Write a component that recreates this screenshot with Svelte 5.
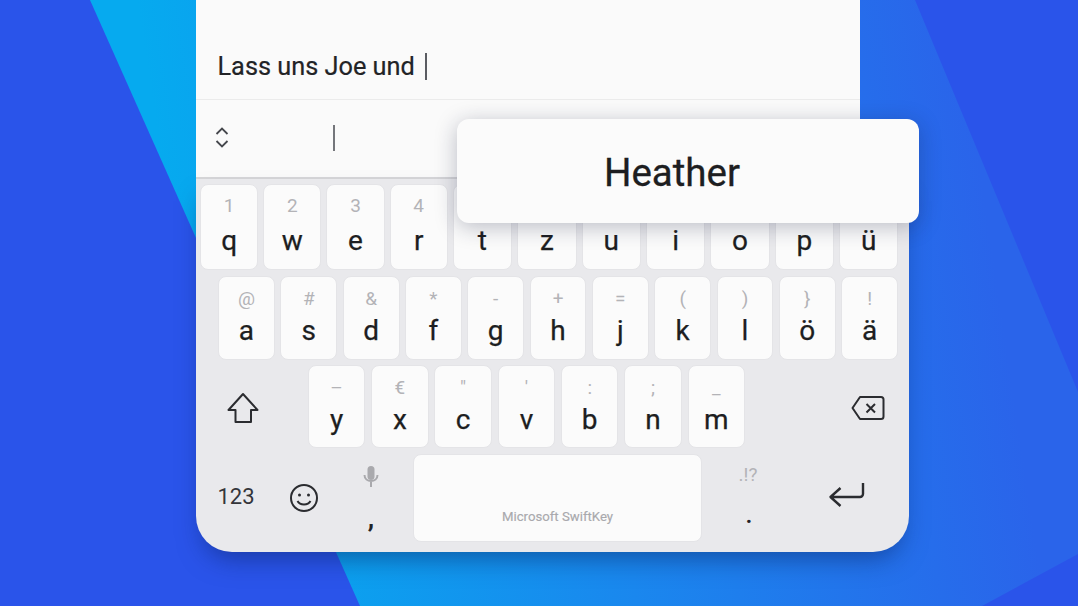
<script>
  const row1 = [
    ['1', 'q'], ['2', 'w'], ['3', 'e'], ['4', 'r'], ['', 't'], ['', 'z'],
    ['', 'u'], ['', 'i'], ['', 'o'], ['', 'p'], ['', 'ü']
  ];
  const row2 = [
    ['@', 'a'], ['#', 's'], ['&', 'd'], ['*', 'f'], ['-', 'g'], ['+', 'h'],
    ['=', 'j'], ['(', 'k'], [')', 'l'], ['}', 'ö'], ['!', 'ä']
  ];
  const row3 = [
    ['–', 'y'], ['€', 'x'], ['"', 'c'], ["'", 'v'], [':', 'b'], [';', 'n'], ['_', 'm']
  ];
</script>

<div class="stage">
  <svg class="bg" viewBox="0 0 1078 606" aria-hidden="true">
    <defs>
      <linearGradient id="shard" gradientUnits="userSpaceOnUse" x1="200" y1="420" x2="1000" y2="300">
        <stop offset="0" stop-color="#06aaef" />
        <stop offset="0.5" stop-color="#1a87ee" />
        <stop offset="1" stop-color="#2a64ea" />
      </linearGradient>
    </defs>
    <rect width="1078" height="606" fill="#2a54ea" />
    <polygon points="90,0 915,0 1078,392 1078,554 982,606 360,606" fill="url(#shard)" />
  </svg>

  <section class="compose">
    <div class="message">
      <span>Lass uns Joe und</span>
      <i class="caret"></i>
    </div>
    <div class="suggestions">
      <svg class="chevrons" width="16" height="24" viewBox="0 0 16 24" aria-hidden="true">
        <path d="M2.500 8 L8 2.500 L13.500 8 M2.500 15 L8 20.500 L13.500 15" />
      </svg>
      <i class="cursor"></i>
    </div>
  </section>

  <section class="keyboard">
    <div class="row row1">
      {#each row1 as [hint, letter]}
        <div class="key"><span class="hint">{hint}</span><span class="letter">{letter}</span></div>
      {/each}
    </div>

    <div class="row row2">
      {#each row2 as [hint, letter]}
        <div class="key"><span class="hint">{hint}</span><span class="letter">{letter}</span></div>
      {/each}
    </div>

    <div class="row row3">
      <div class="slot shift">
        <svg width="34" height="34" viewBox="0 0 34 34" aria-hidden="true">
          <path d="M17 3 L2.500 19 H9.500 V31 H25 V19 H31.500 Z" />
        </svg>
      </div>
      {#each row3 as [hint, letter]}
        <div class="key"><span class="hint">{hint}</span><span class="letter">{letter}</span></div>
      {/each}
      <div class="slot backspace">
        <svg width="34" height="26" viewBox="0 0 34 26" aria-hidden="true">
          <path d="M9 2 H30 a2.500 2.500 0 0 1 2.500 2.500 V21.500 a2.500 2.500 0 0 1 -2.500 2.500 H9 L1.500 13 Z" />
          <path d="M15.500 9 L24 17.500 M24 9 L15.500 17.500" />
        </svg>
      </div>
    </div>

    <div class="row row4">
      <div class="slot numbers">123</div>
      <div class="slot emoji">
        <svg width="30" height="30" viewBox="0 0 30 30" aria-hidden="true">
          <circle cx="15" cy="15" r="13" />
          <circle class="eye" cx="10.500" cy="12" r="1.500" />
          <circle class="eye" cx="19.500" cy="12" r="1.500" />
          <path d="M8.500 18 C11 22.500 19 22.500 21.500 18" />
        </svg>
      </div>
      <div class="slot comma">
        <svg width="18" height="22" viewBox="0 0 18 22" aria-hidden="true">
          <rect x="5.500" y="0" width="7" height="14" rx="3.500" />
          <path d="M2.500 9 C2.500 17 15.500 17 15.500 9 M9 15 V21" />
        </svg>
        <span>,</span>
      </div>
      <div class="space"><span>Microsoft SwiftKey</span></div>
      <div class="slot period">
        <span class="hint">.!?</span>
        <span>.</span>
      </div>
      <div class="slot enter">
        <svg width="38" height="28" viewBox="0 0 38 28" aria-hidden="true">
          <path d="M35 2 V13 a3 3 0 0 1 -3 3 H3 M12.500 7 L2.500 16 L12.500 25" />
        </svg>
      </div>
    </div>
  </section>

  <div class="popup">Heather</div>
</div>

<style>
  :global(body) {
    margin: 0;
  }

  .stage {
    position: relative;
    width: 1078px;
    height: 606px;
    padding-left: 196px;
    box-sizing: border-box;
    overflow: hidden;
    font-family: Roboto, "Liberation Sans", sans-serif;
    color: #222326;
  }

  .bg {
    position: absolute;
    inset: 0;
    width: 100%;
    height: 100%;
  }

  .compose,
  .keyboard,
  .popup {
    position: relative;
  }

  .compose {
    width: 664px;
    height: 179px;
    background: #fafafa;
  }

  .message {
    height: 100px;
    box-sizing: border-box;
    padding: 50px 0 0 21.500px;
    display: flex;
    align-items: flex-start;
    gap: 10px;
    font-size: 25.300px;
    line-height: 34px;
    -webkit-text-stroke: 0.2px #222326;
    border-bottom: 1px solid #ebebeb;
  }

  .caret {
    width: 2px;
    height: 27px;
    margin-top: 3px;
    background: #5a5c62;
  }

  .suggestions {
    height: 79px;
    box-sizing: border-box;
    display: flex;
    align-items: center;
    padding: 0 0 2px 18px;
    border-bottom: 2px solid #d6d6d8;
  }

  .chevrons {
    margin-top: 1px;
  }

  .chevrons path {
    fill: none;
    stroke: #45474c;
    stroke-width: 1.800;
  }

  .cursor {
    width: 2px;
    height: 26px;
    margin-left: 103px;
    background: #74767b;
  }

  .keyboard {
    width: 713px;
    height: 373px;
    box-sizing: border-box;
    padding: 5px 12px 0 4px;
    background: #e9e9ec;
    border-radius: 0 0 36px 36px;
    box-shadow: 0 14px 26px -8px rgba(8, 30, 90, 0.5);
  }

  .row {
    display: flex;
  }

  .row1 {
    height: 86px;
    gap: 5px;
  }

  .row1 .key {
    padding-top: 10px;
    flex: 0 0 59.400px;
  }

  .row1 .key:nth-child(-n+4) {
    flex-basis: 58.200px;
  }

  .row1 .letter {
    margin-top: 8px;
  }

  .row2 {
    height: 84px;
    gap: 5.400px;
    margin: 6px -1px 0 18px;
  }

  .row3 {
    height: 83px;
    gap: 5.800px;
    margin: 5px -12px 0 -4px;
  }

  .row4 {
    height: 88px;
    margin: 6px -12px 0 -4px;
  }

  .key {
    flex: 1 1 0;
    box-sizing: border-box;
    display: flex;
    flex-direction: column;
    align-items: center;
    padding-top: 11px;
    background: #fbfbfb;
    border: 1px solid #e4e4e7;
    border-radius: 8px;
  }

  .row3 .key {
    flex: 0 0 57.500px;
  }

  .hint {
    height: 22px;
    font-size: 19px;
    line-height: 22px;
    color: #b3b3b7;
  }

  .letter {
    margin-top: 5px;
    font-size: 28px;
    line-height: 32px;
    color: #1d1e21;
    -webkit-text-stroke: 0.25px #1d1e21;
  }

  .slot {
    display: flex;
    align-items: center;
    justify-content: center;
  }

  .slot svg {
    fill: none;
    stroke: #2b2c30;
    stroke-width: 2;
    stroke-linejoin: round;
  }

  .shift {
    width: 94px;
    margin-right: 12px;
    padding-top: 2px;
  }

  .backspace {
    width: 82px;
    margin-left: auto;
    padding-top: 2px;
  }

  .numbers {
    width: 80px;
    padding-bottom: 4px;
    font-size: 22px;
    color: #34353a;
  }

  .emoji {
    width: 56px;
  }

  .emoji .eye {
    fill: #2b2c30;
    stroke: none;
  }

  .comma,
  .period {
    flex-direction: column;
    justify-content: flex-start;
    font-size: 26px;
    font-weight: 700;
    line-height: 30px;
  }

  .comma {
    width: 78px;
    padding-top: 12px;
    margin-right: 3px;
  }

  .comma svg {
    stroke: #a9a9ad;
    fill: none;
  }

  .comma rect {
    fill: #a9a9ad;
    stroke: none;
  }

  .comma span {
    margin-top: 15px;
  }

  .space {
    width: 289px;
    box-sizing: border-box;
    display: flex;
    align-items: flex-end;
    justify-content: center;
    padding-bottom: 16px;
    background: #fbfbfb;
    border: 1px solid #e4e4e7;
    border-radius: 8px;
    font-size: 13.200px;
    line-height: 16px;
    color: #a9a9ad;
    -webkit-text-stroke: 0.15px #a9a9ad;
  }

  .period {
    width: 94px;
    padding-top: 11px;
    font-size: 22px;
  }

  .period .hint {
    font-weight: 400;
    font-size: 19px;
    height: 20px;
    line-height: 20px;
    margin-left: -2px;
  }

  .period span:last-child {
    margin-top: 16px;
  }

  .enter {
    width: 102px;
    padding-bottom: 6px;
  }

  .enter svg {
    stroke-width: 2.400;
  }

  .popup {
    position: absolute;
    left: 457px;
    top: 119px;
    width: 462px;
    height: 104px;
    display: flex;
    align-items: center;
    justify-content: center;
    padding: 2px 32px 0 0;
    box-sizing: border-box;
    background: #fbfbfb;
    border-radius: 12px;
    box-shadow: 0 4px 22px rgba(20, 30, 60, 0.28);
    font-size: 38.500px;
    color: #1d1e21;
    -webkit-text-stroke: 0.3px #1d1e21;
  }
</style>
